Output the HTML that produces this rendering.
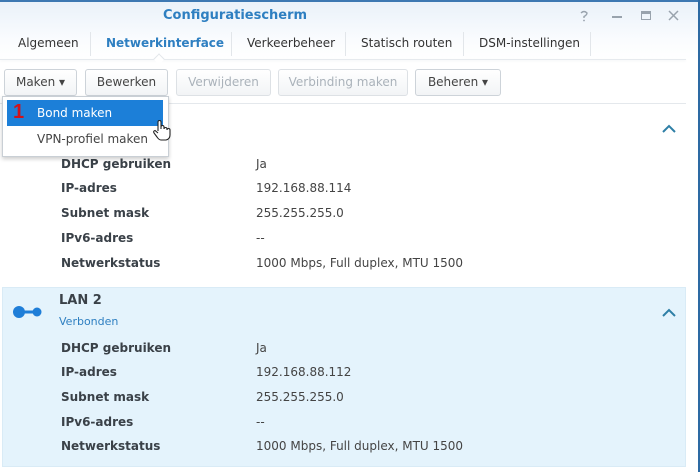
<!DOCTYPE html>
<html><head><meta charset="utf-8"><style>
*{margin:0;padding:0;box-sizing:border-box}
body{width:700px;height:472px;overflow:hidden;background:#fff;font-family:"DejaVu Sans","Liberation Sans",sans-serif;color:#333;position:relative}
.abs{position:absolute;white-space:nowrap}
.hdr{position:absolute;left:0;top:0;width:700px;height:60px;background:linear-gradient(#e9f1f9,#fafcfe 40px,#fff)}
.top{position:absolute;left:0;top:0;width:700px;height:2px;background:#3d78b2}
.rb{position:absolute;right:0;top:0;width:2px;height:472px;background:#2d6aa3}
.title{left:163px;top:8px;font-size:13px;font-weight:bold;color:#2e7fc1}
.tab{top:36px;font-size:12px;color:#333}
.sep{position:absolute;top:32px;width:1px;height:24px;background:#e2e6ea}
.btn{position:absolute;top:69px;height:27px;border:1px solid #cdd3d9;border-radius:3px;background:linear-gradient(#fff,#f2f4f6);font-size:12px;line-height:25px;text-align:center;color:#444}
.dis{color:#aab2ba;border-color:#dde1e5}
.lbl{font-size:12px;font-weight:bold;color:#3a4148;left:61px}
.val{font-size:12px;color:#444;left:256px}
</style></head><body>
<div class="hdr"></div>
<div class="top"></div>
<div class="abs title">Configuratiescherm</div>
<svg class="abs" style="left:579px;top:10px" width="10" height="12"><path d="M2 3 Q5 0 8 3 Q8 5 5 6.5 V8" fill="none" stroke="#99a3ad" stroke-width="1.4"/><circle cx="5" cy="10.5" r="0.9" fill="#99a3ad"/></svg>
<div class="abs" style="left:612px;top:16px;width:10px;height:1.5px;background:#99a3ad"></div>
<div class="abs" style="left:641px;top:11px;width:10px;height:9px;border:1.5px solid #99a3ad;border-top-width:3px"></div>
<svg class="abs" style="left:668px;top:10px" width="11" height="11"><path d="M1 1L10 10M10 1L1 10" stroke="#99a3ad" stroke-width="1.5"/></svg>
<div class="abs tab" style="left:18px">Algemeen</div>
<div class="sep" style="left:90px"></div>
<div class="abs tab" style="left:106px;font-weight:bold;color:#2e7fc1">Netwerkinterface</div>
<div class="sep" style="left:231px"></div>
<div class="abs tab" style="left:247px">Verkeerbeheer</div>
<div class="sep" style="left:345px"></div>
<div class="abs tab" style="left:361px">Statisch routen</div>
<div class="sep" style="left:463px"></div>
<div class="abs tab" style="left:479px">DSM-instellingen</div>
<div class="sep" style="left:590px"></div>
<div class="abs" style="left:0;top:59px;width:686px;height:1px;background:#e6eaee;box-shadow:0 1px 2px #eef1f4"></div>
<div class="abs" style="left:155px;top:55px;width:8px;height:8px;background:#fff;border-left:1px solid #e2e6ea;border-top:1px solid #e2e6ea;transform:rotate(45deg)"></div>
<div class="btn" style="left:4px;width:73px">Maken ▾</div>
<div class="btn" style="left:85px;width:83px">Bewerken</div>
<div class="btn dis" style="left:176px;width:95px">Verwijderen</div>
<div class="btn dis" style="left:278px;width:130px">Verbinding maken</div>
<div class="btn" style="left:415px;width:86px">Beheren ▾</div>
<div class="abs" style="left:0;top:103px;width:686px;height:1px;background:#e4e8ec"></div>
<svg class="abs" style="left:662px;top:124px" width="14" height="9"><path d="M1 8L7 2L13 8" fill="none" stroke="#2e7fa6" stroke-width="2"/></svg>
<div class="abs lbl" style="top:157px">DHCP gebruiken</div><div class="abs val" style="top:157px">Ja</div>
<div class="abs lbl" style="top:181px">IP-adres</div><div class="abs val" style="top:181px">192.168.88.114</div>
<div class="abs lbl" style="top:206px">Subnet mask</div><div class="abs val" style="top:206px">255.255.255.0</div>
<div class="abs lbl" style="top:231px">IPv6-adres</div><div class="abs val" style="top:231px">--</div>
<div class="abs lbl" style="top:256px">Netwerkstatus</div><div class="abs val" style="top:256px">1000 Mbps, Full duplex, MTU 1500</div>
<div class="abs" style="left:2px;top:287px;width:684px;height:180px;background:#e4f3fc;border:1px solid #d9ebf6"></div>
<svg class="abs" style="left:12px;top:304px" width="32" height="16"><circle cx="7" cy="8" r="6" fill="#1f7ed8"/><circle cx="25" cy="8" r="4.5" fill="#1f7ed8"/><rect x="10" y="6.5" width="12" height="3" fill="#1f7ed8"/></svg>
<div class="abs" style="left:59px;top:293px;font-size:13px;font-weight:bold;color:#3a4148">LAN 2</div>
<div class="abs" style="left:59px;top:315px;font-size:11px;color:#2e7fc1">Verbonden</div>
<svg class="abs" style="left:662px;top:308px" width="14" height="9"><path d="M1 8L7 2L13 8" fill="none" stroke="#2e7fa6" stroke-width="2"/></svg>
<div class="abs lbl" style="top:341px">DHCP gebruiken</div><div class="abs val" style="top:341px">Ja</div>
<div class="abs lbl" style="top:365px">IP-adres</div><div class="abs val" style="top:365px">192.168.88.112</div>
<div class="abs lbl" style="top:390px">Subnet mask</div><div class="abs val" style="top:390px">255.255.255.0</div>
<div class="abs lbl" style="top:415px">IPv6-adres</div><div class="abs val" style="top:415px">--</div>
<div class="abs lbl" style="top:439px">Netwerkstatus</div><div class="abs val" style="top:439px">1000 Mbps, Full duplex, MTU 1500</div>
<div class="abs" style="left:2px;top:96px;width:167px;height:61px;background:#fff;border:1px solid #c9cfd5;box-shadow:0 2px 4px rgba(0,0,0,.2)"></div>
<div class="abs" style="left:7px;top:100px;width:156px;height:26px;background:#1c7fd8"></div>
<div class="abs" style="left:13px;top:101px;font-size:20px;font-weight:900;color:#d0121b;font-family:'Liberation Sans',sans-serif">1</div>
<div class="abs" style="left:37px;top:106px;font-size:12px;color:#fff">Bond maken</div>
<div class="abs" style="left:37px;top:132px;font-size:12px;color:#444">VPN-profiel maken</div>
<svg class="abs" style="left:152px;top:119px" width="20" height="22"><path d="M6 12V3a1.5 1.5 0 0 1 3 0v7V8a1.5 1.5 0 0 1 3 0v2a1.5 1.5 0 0 1 3 0v1a1.5 1.5 0 0 1 3 0v5q0 4-4 5H9q-2 0-4-3L2 14q-1-2 1-2.5L6 14" fill="#fff" stroke="#222" stroke-width="1.1"/></svg>
<div class="rb"></div>
</body></html>
